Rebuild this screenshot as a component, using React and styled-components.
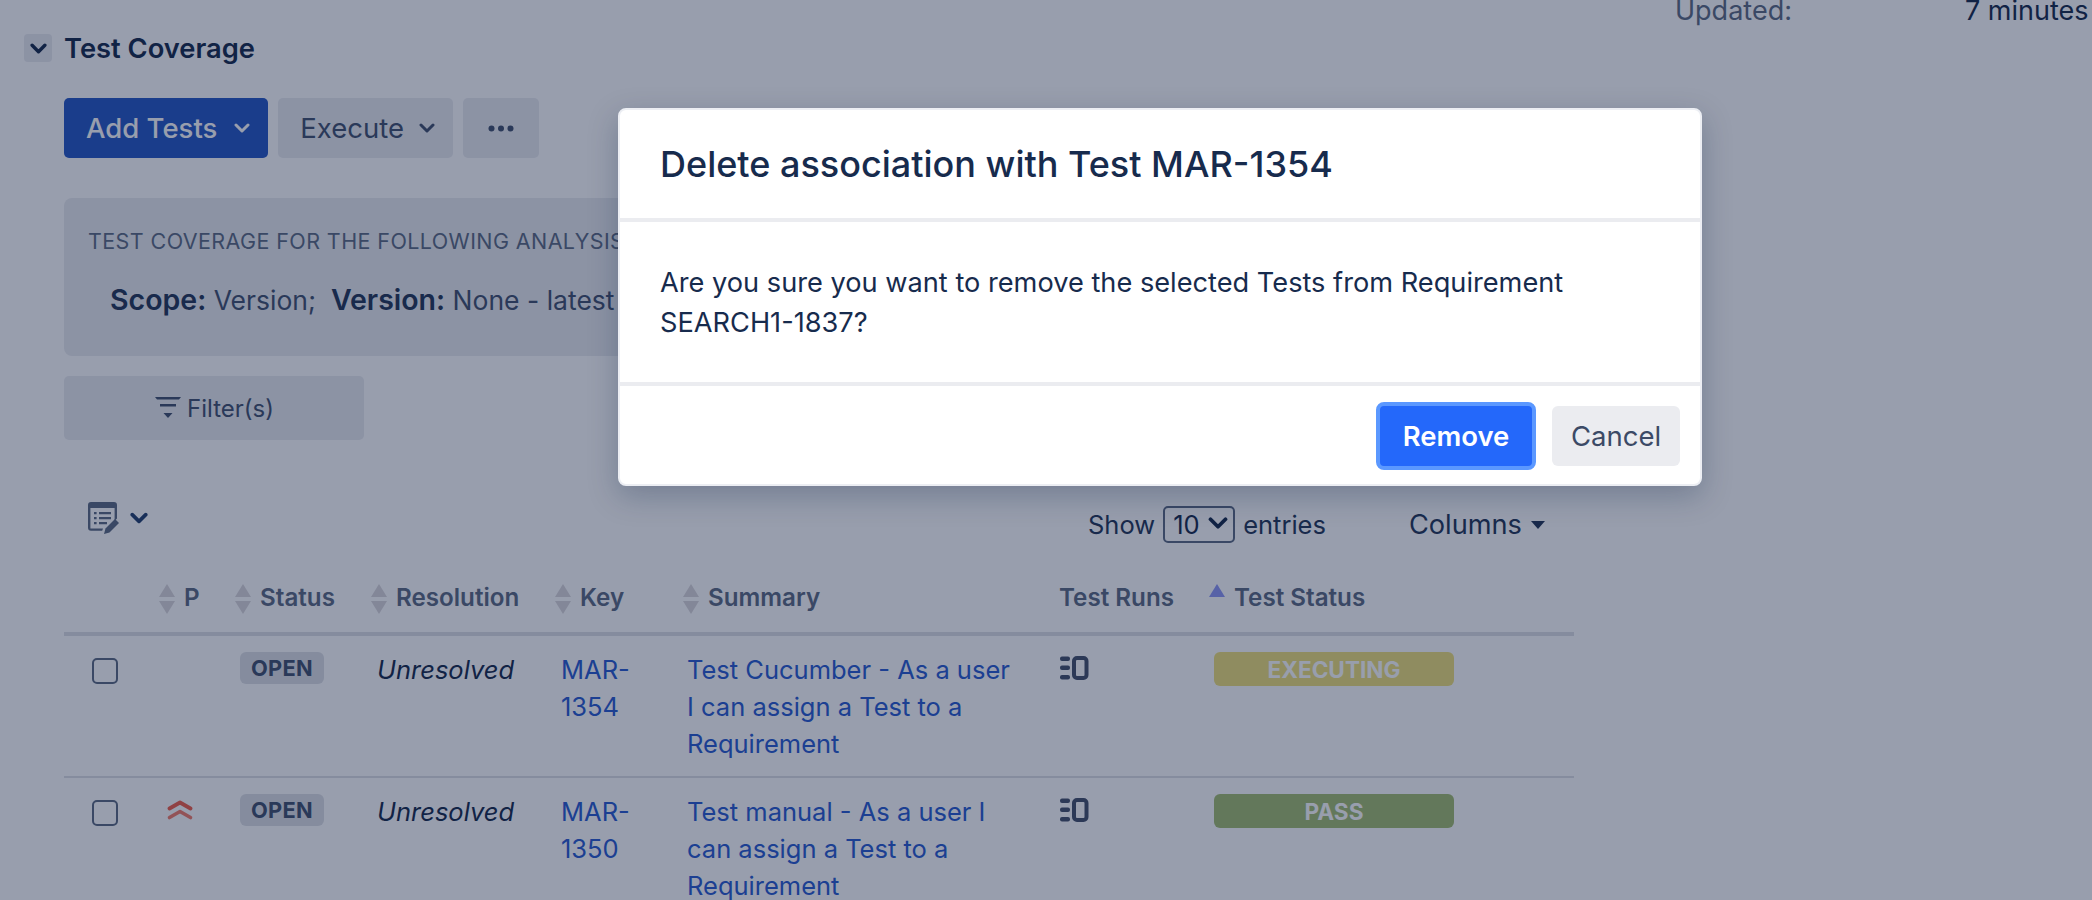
import styled, { createGlobalStyle } from "styled-components";

const GlobalStyle = createGlobalStyle`
    html, body {
        margin: 0;
        padding: 0;
        background: #fff;
        font-family: Inter, "Noto Sans", "Liberation Sans", sans-serif;
        color: #172b4d;
    }
`;

const COLUMNS = "95px 76px 136px 184px 128px 376px 150px 365px";

const rows = [
    {
        id: "MAR-1354",
        keyLines: ["MAR-", "1354"],
        summary: ["Test Cucumber - As a user", "I can assign a Test to a", "Requirement"],
        result: "EXECUTING",
        tone: "#f0e17b",
    },
    {
        id: "MAR-1350",
        keyLines: ["MAR-", "1350"],
        summary: ["Test manual - As a user I", "can assign a Test to a", "Requirement"],
        result: "PASS",
        tone: "#a4be72",
        priority: true,
    },
];

const Chevron = ({ size = 16, width = 3 }) => (
    <svg width={size} height={size} viewBox="0 0 16 16" fill="none">
        <path d="M2 5l6 6 6-6" stroke="currentColor" strokeWidth={width} strokeLinecap="round" strokeLinejoin="round" />
    </svg>
);

const EditListIcon = () => (
    <svg width="32" height="32" viewBox="0 0 32 32" fill="none">
        <path d="M3 0h23a3 3 0 0 1 3 3v13.5l-2.4 2.4V6H2.4v20.5H15l-.8 2.3H3a3 3 0 0 1-3-3V3a3 3 0 0 1 3-3z" fill="#5e6c84" />
        <path d="M6 10h2.6v2.2H6zM11 10h12v2.2H11zM6 15h2.6v2.2H6zM11 15h12v2.2H11zM6 20h2.6v2.2H6zM11 20h8v2.2h-8z" fill="#5e6c84" />
        <path d="M27 17l4 4-9.500 9.500-5.500 1.500 1.500-5.500z" fill="#5e6c84" />
    </svg>
);

const RunsIcon = () => (
    <svg width="29" height="24" viewBox="0 0 29 24" fill="none">
        <rect x="0" y="0.5" width="10" height="4.600" rx="2" fill="#46526c" />
        <rect x="0" y="9.500" width="10" height="4.600" rx="2" fill="#46526c" />
        <rect x="0" y="19" width="10" height="4.600" rx="2" fill="#46526c" />
        <rect x="14" y="2" width="12.500" height="20" rx="3" stroke="#46526c" strokeWidth="4" />
    </svg>
);

const FilterIcon = () => (
    <svg width="28" height="26" viewBox="0 0 28 26" fill="none">
        <path d="M1 2h26l-2 2.500H3zM6 9h16v2.500H6z" fill="#42526e" />
        <path d="M9.500 18h9L14 23z" fill="#42526e" />
    </svg>
);

const PriorityIcon = () => (
    <svg width="26" height="20" viewBox="0 0 26 20" fill="none">
        <path d="M2.500 8.500L13 2.500l10.500 6" stroke="#f2604a" strokeWidth="3.800" strokeLinecap="round" strokeLinejoin="round" />
        <path d="M2.500 17.500L13 11.500l10.500 6" stroke="#f57f6c" strokeWidth="3.600" strokeLinecap="round" strokeLinejoin="round" />
    </svg>
);

const SortArrows = ({ only }) => (
    <SortMark>
        <svg width="16" height="30" viewBox="0 0 16 30">
            <path d="M8 0l8 13H0z" fill={only ? "#8f98f5" : "#dbd8db"} />
            {!only && <path d="M8 30L0 17h16z" fill="#dbd8db" />}
        </svg>
    </SortMark>
);

const App = () => {
    return (
        <>
            <GlobalStyle />
            <Page>
                <MetaRow>
                    <MetaLabel>Updated:</MetaLabel>
                    <span>7 minutes</span>
                </MetaRow>

                <SectionHead>
                    <Toggle><Chevron size={17} width={3.2} /></Toggle>
                    <SectionTitle>Test Coverage</SectionTitle>
                </SectionHead>

                <Content>
                    <Toolbar>
                        <ToolButton $primary>
                            Add Tests <Chevron />
                        </ToolButton>
                        <ToolButton>
                            Execute <Chevron />
                        </ToolButton>
                        <MoreButton>
                            <svg width="26" height="7" viewBox="0 0 26 7">
                                <circle cx="3.500" cy="3.500" r="3" fill="#42526e" />
                                <circle cx="13" cy="3.500" r="3" fill="#42526e" />
                                <circle cx="22.500" cy="3.500" r="3" fill="#42526e" />
                            </svg>
                        </MoreButton>
                    </Toolbar>

                    <AnalysisPanel>
                        <PanelLabel>TEST COVERAGE FOR THE FOLLOWING ANALYSIS</PanelLabel>
                        <PanelValue>
                            <b>Scope:</b> Version;&nbsp; <b>Version:</b> None - latest
                        </PanelValue>
                    </AnalysisPanel>

                    <FilterButton>
                        <FilterIcon />
                        Filter(s)
                    </FilterButton>

                    <TableTools>
                        <EditMenu>
                            <EditListIcon />
                            <Chevron size={18} width={3.2} />
                        </EditMenu>
                        <Entries>
                            Show
                            <SelectWrap>
                                <EntrySelect defaultValue="10">
                                    <option value="10">10</option>
                                    <option value="25">25</option>
                                </EntrySelect>
                                <SelectArrow><Chevron size={20} width={3} /></SelectArrow>
                            </SelectWrap>
                            entries
                        </Entries>
                        <ColumnsMenu>
                            Columns <Caret />
                        </ColumnsMenu>
                    </TableTools>

                    <HeadRow>
                        <span />
                        <HeadCell><SortArrows /><span>P</span></HeadCell>
                        <HeadCell><SortArrows /><span>Status</span></HeadCell>
                        <HeadCell><SortArrows /><span>Resolution</span></HeadCell>
                        <HeadCell><SortArrows /><span>Key</span></HeadCell>
                        <HeadCell><SortArrows /><span>Summary</span></HeadCell>
                        <HeadCell>Test Runs</HeadCell>
                        <HeadCell><SortArrows only /><span>Test Status</span></HeadCell>
                    </HeadRow>

                    {rows.map((row) => (
                        <BodyRow key={row.id}>
                            <CheckCell><Check type="checkbox" /></CheckCell>
                            <PriorityCell>{row.priority && <PriorityIcon />}</PriorityCell>
                            <BadgeCell><Badge>OPEN</Badge></BadgeCell>
                            <Unresolved>Unresolved</Unresolved>
                            <KeyCell>
                                {row.keyLines.map((line) => <div key={line}>{line}</div>)}
                            </KeyCell>
                            <SummaryCell>
                                {row.summary.map((line) => <div key={line}>{line}</div>)}
                            </SummaryCell>
                            <RunsCell><RunsIcon /></RunsCell>
                            <BadgeCell>
                                <ResultBar $tone={row.tone}>{row.result}</ResultBar>
                            </BadgeCell>
                        </BodyRow>
                    ))}
                </Content>

                <Overlay>
                    <Modal>
                        <ModalHead>Delete association with Test MAR-1354</ModalHead>
                        <ModalBody>
                            Are you sure you want to remove the selected Tests from Requirement SEARCH1-1837?
                        </ModalBody>
                        <ModalFoot>
                            <RemoveButton>Remove</RemoveButton>
                            <CancelButton>Cancel</CancelButton>
                        </ModalFoot>
                    </Modal>
                </Overlay>
            </Page>
        </>
    );
};

const Page = styled.div`
    position: relative;
    width: 2092px;
    height: 900px;
    overflow: hidden;
    font-size: 25.5px;
`;

const MetaRow = styled.div`
    display: grid;
    grid-template-columns: 290px 1fr;
    height: 22px;
    line-height: 22px;
    margin-left: 1675px;
    font-size: 27px;
    white-space: nowrap;
`;

const MetaLabel = styled.span`
    color: #5e6c84;
`;

const SectionHead = styled.div`
    display: flex;
    align-items: center;
    gap: 12px;
    height: 28px;
    margin: 12px 0 0 24px;
`;

const Toggle = styled.div`
    display: flex;
    align-items: center;
    justify-content: center;
    width: 28px;
    height: 28px;
    border-radius: 4px;
    background: #ebecf0;
    color: #172b4d;
`;

const SectionTitle = styled.h2`
    margin: 0;
    font-size: 27.3px;
    font-weight: 600;
`;

const Content = styled.div`
    width: 1510px;
    margin-left: 64px;
`;

const Toolbar = styled.div`
    display: flex;
    gap: 10px;
    margin-top: 36px;
`;

const ToolButton = styled.div`
    display: flex;
    align-items: center;
    gap: ${(p) => (p.$primary ? "17px" : "15px")};
    height: 60px;
    padding: 0 18px 0 22px;
    border-radius: 5px;
    background: ${(p) => (p.$primary ? "#2658c5" : "#ebecf0")};
    color: ${(p) => (p.$primary ? "#fff" : "#42526e")};
    font-size: 27.5px;
    font-weight: ${(p) => (p.$primary ? 500 : 400)};
`;

const MoreButton = styled.div`
    display: flex;
    align-items: center;
    justify-content: center;
    width: 76px;
    height: 60px;
    border-radius: 5px;
    background: #ebecf0;
`;

const AnalysisPanel = styled.div`
    height: 158px;
    margin-top: 40px;
    padding: 30px 24px 0;
    box-sizing: border-box;
    border-radius: 8px;
    background: #ebecf0;
`;

const PanelLabel = styled.div`
    font-size: 21.5px;
    line-height: 26px;
    letter-spacing: 0.4px;
    color: #5e6c84;
    white-space: nowrap;
`;

const PanelValue = styled.div`
    margin: 31px 0 0 22px;
    line-height: 30px;
    font-size: 26.5px;
    color: #42526e;
    white-space: nowrap;

    b {
        font-size: 28.5px;
        font-weight: 600;
        color: #253858;
    }
`;

const FilterButton = styled.div`
    display: flex;
    align-items: center;
    justify-content: center;
    gap: 5px;
    width: 300px;
    height: 64px;
    margin-top: 20px;
    border-radius: 5px;
    background: #ebecf0;
    color: #42526e;
    font-size: 24px;
`;

const TableTools = styled.div`
    display: flex;
    align-items: center;
    height: 37px;
    margin-top: 66px;
    color: #253858;
`;

const EditMenu = styled.div`
    display: flex;
    align-items: center;
    gap: 10px;
    margin: 0 0 14px 24px;
    color: #24406f;
`;

const Entries = styled.div`
    display: flex;
    align-items: center;
    gap: 8px;
    margin-left: 940px;
`;

const SelectWrap = styled.div`
    position: relative;
    display: flex;
`;

const EntrySelect = styled.select`
    appearance: none;
    width: 72px;
    height: 37px;
    padding: 0 0 0 8px;
    border: 2px solid #5e6c84;
    border-radius: 5px;
    background: transparent;
    color: #172b4d;
    font: inherit;
`;

const SelectArrow = styled.span`
    position: absolute;
    top: 7px;
    right: 7px;
    display: flex;
    color: #172b4d;
    pointer-events: none;
`;

const ColumnsMenu = styled.div`
    display: flex;
    align-items: center;
    gap: 9px;
    margin-left: 83px;
    font-size: 27.2px;
`;

const Caret = styled.span`
    width: 0;
    height: 0;
    border-left: 7.5px solid transparent;
    border-right: 7.5px solid transparent;
    border-top: 8px solid #253858;
`;

const HeadRow = styled.div`
    display: grid;
    grid-template-columns: ${COLUMNS};
    height: 76px;
    margin-top: 17px;
    padding-top: 24px;
    box-sizing: border-box;
    border-bottom: 4px solid #dfe1e6;
`;

const HeadCell = styled.div`
    display: flex;
    gap: 9px;
    height: 30px;
    font-size: 24.2px;
    font-weight: 600;
    line-height: 28px;
    color: #5e6c84;
    white-space: nowrap;
`;

const SortMark = styled.span`
    display: flex;
    flex: none;
`;

const BodyRow = styled.div`
    display: grid;
    grid-template-columns: ${COLUMNS};
    height: 142px;
    box-sizing: border-box;
    padding-top: 15px;
    border-bottom: 2px solid #dfe1e6;
    line-height: 37px;
`;

const CheckCell = styled.div`
    padding: 7px 0 0 28px;
`;

const Check = styled.input`
    appearance: none;
    display: block;
    width: 26px;
    height: 26px;
    margin: 0;
    border: 2px solid #5e6c84;
    border-radius: 5px;
    background: transparent;
`;

const PriorityCell = styled.div`
    display: flex;
    align-items: flex-start;
    padding: 7px 0 0 8px;
`;

const BadgeCell = styled.div`
    display: flex;
    align-items: flex-start;
    padding: 1px 0 0 5px;
`;

const Badge = styled.span`
    padding: 0 11px;
    height: 32px;
    line-height: 33px;
    border-radius: 6px;
    background: #dfe1e6;
    color: #42526e;
    font-size: 21.8px;
    font-weight: 700;
    letter-spacing: 0.3px;
`;

const Unresolved = styled.div`
    padding-left: 6px;
    font-style: italic;
    color: #172b4d;
`;

const KeyCell = styled.div`
    padding-left: 6px;
    color: #2a5cd0;
    white-space: nowrap;
`;

const SummaryCell = styled(KeyCell)`
    padding-left: 4px;
`;

const RunsCell = styled.div`
    display: flex;
    align-items: flex-start;
    padding: 5px 0 0 1px;
`;

const ResultBar = styled.div`
    width: 240px;
    height: 34px;
    line-height: 36px;
    border-radius: 6px;
    background: ${(p) => p.$tone};
    color: #fff;
    font-size: 22.6px;
    font-weight: 700;
    text-align: center;
`;

const Overlay = styled.div`
    position: absolute;
    inset: 0;
    padding: 108px 0 0 618px;
    background: rgba(9, 25, 60, 0.42);
`;

const Modal = styled.div`
    width: 1084px;
    height: 378px;
    box-sizing: border-box;
    border: 2px solid #eceef3;
    border-radius: 8px;
    background: #fff;
    box-shadow: 0 10px 30px rgba(9, 30, 66, 0.25);
    color: #172b4d;
    overflow: hidden;
`;

const ModalHead = styled.div`
    height: 112px;
    box-sizing: border-box;
    padding: 33px 40px 0;
    border-bottom: 4px solid #ebecf0;
    font-size: 36px;
    font-weight: 500;
    line-height: 42px;
`;

const ModalBody = styled.div`
    height: 164px;
    box-sizing: border-box;
    padding: 41px 80px 0 40px;
    border-bottom: 4px solid #ebecf0;
    font-size: 27.2px;
    line-height: 40px;
`;

const ModalFoot = styled.div`
    display: flex;
    align-items: center;
    justify-content: flex-end;
    gap: 16px;
    height: 100px;
    padding: 0 20px 0 0;
`;

const RemoveButton = styled.button`
    width: 160px;
    height: 68px;
    border: 4px solid #5b98ff;
    border-radius: 8px;
    background: #2468fa;
    color: #fff;
    font: inherit;
    font-size: 27.5px;
    font-weight: 600;
`;

const CancelButton = styled.button`
    width: 128px;
    height: 60px;
    border: 0;
    border-radius: 6px;
    background: #ebecf0;
    color: #3c4a66;
    font: inherit;
    font-size: 27.5px;
`;

export default App;
